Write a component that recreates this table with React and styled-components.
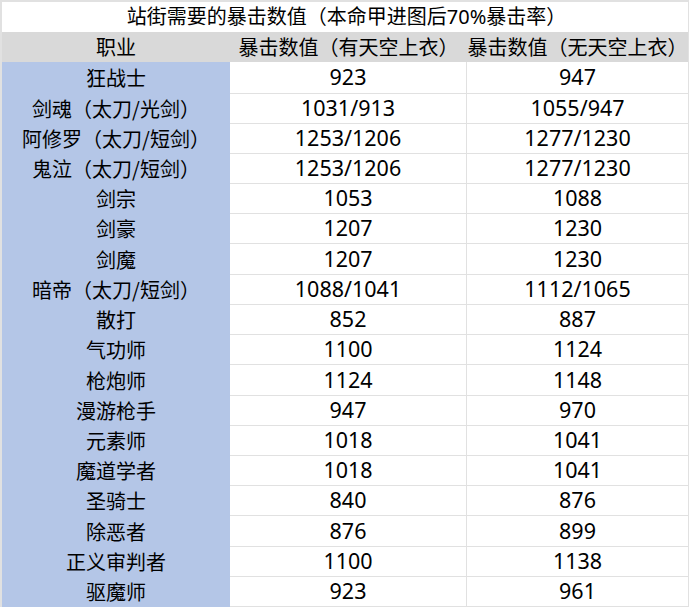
import React from "react";
import styled, { createGlobalStyle } from "styled-components";

const GlobalStyle = createGlobalStyle`
  html, body {
    margin: 0;
    padding: 0;
    background: #ffffff;
  }
  body {
    font-family: "Noto Sans CJK SC", "Noto Sans", sans-serif;
    color: #000;
  }
`;

const GRID = "#e1e1e1";
const COLS = "228px 237px 221px";

const Sheet = styled.div`
  width: 689px;
  box-sizing: border-box;
  border-top: 2px solid ${GRID};
  border-left: 2px solid ${GRID};
  border-right: 1px solid ${GRID};
  display: flex;
  flex-direction: column;
  font-size: 20px;
  line-height: 1;
`;

const Title = styled.div`
  height: 30px;
  display: flex;
  align-items: center;
  justify-content: center;
  padding-left: 3px;
  white-space: nowrap;
  background: #fff;
  font-family: "Noto Sans", "Noto Sans CJK SC", sans-serif;
`;

const Row = styled.div`
  display: grid;
  grid-template-columns: ${COLS};
  height: ${(p) => p.$h}px;
  background: ${(p) => (p.$header ? "#d9d9d9" : "#fff")};
`;

const Cell = styled.div`
  box-sizing: border-box;
  display: flex;
  align-items: center;
  justify-content: center;
  white-space: nowrap;
  min-width: 0;
`;

const HeaderCell = styled(Cell)`
  overflow: visible;
`;

const NameCell = styled(Cell)`
  background: #b4c6e7;
`;

const ValueCell = styled(Cell)`
  border-bottom: 1px solid ${GRID};
  border-right: ${(p) => (p.$last ? "none" : `1px solid ${GRID}`)};
  font-family: "Noto Sans", "Noto Sans CJK SC", sans-serif;
  font-size: 21.5px;
  padding-bottom: 1px;
`;

const rows = [
  ["狂战士", "923", "947"],
  ["剑魂（太刀/光剑）", "1031/913", "1055/947"],
  ["阿修罗（太刀/短剑）", "1253/1206", "1277/1230"],
  ["鬼泣（太刀/短剑）", "1253/1206", "1277/1230"],
  ["剑宗", "1053", "1088"],
  ["剑豪", "1207", "1230"],
  ["剑魔", "1207", "1230"],
  ["暗帝（太刀/短剑）", "1088/1041", "1112/1065"],
  ["散打", "852", "887"],
  ["气功师", "1100", "1124"],
  ["枪炮师", "1124", "1148"],
  ["漫游枪手", "947", "970"],
  ["元素师", "1018", "1041"],
  ["魔道学者", "1018", "1041"],
  ["圣骑士", "840", "876"],
  ["除恶者", "876", "899"],
  ["正义审判者", "1100", "1138"],
  ["驱魔师", "923", "961"],
];

const heights = [32, 30, 30, 30, 30, 30, 31, 30, 30, 30, 31, 30, 30, 30, 30, 31, 30, 30];

export default function App() {
  return (
    <>
      <GlobalStyle />
      <Sheet>
        <Title>站街需要的暴击数值（本命甲进图后70%暴击率）</Title>
        <Row $h={30} $header>
          <HeaderCell>职业</HeaderCell>
          <HeaderCell>暴击数值（有天空上衣）</HeaderCell>
          <HeaderCell>暴击数值（无天空上衣）</HeaderCell>
        </Row>
        {rows.map((r, i) => (
          <Row key={i} $h={heights[i]}>
            <NameCell>{r[0]}</NameCell>
            <ValueCell>{r[1]}</ValueCell>
            <ValueCell $last>{r[2]}</ValueCell>
          </Row>
        ))}
      </Sheet>
    </>
  );
}
